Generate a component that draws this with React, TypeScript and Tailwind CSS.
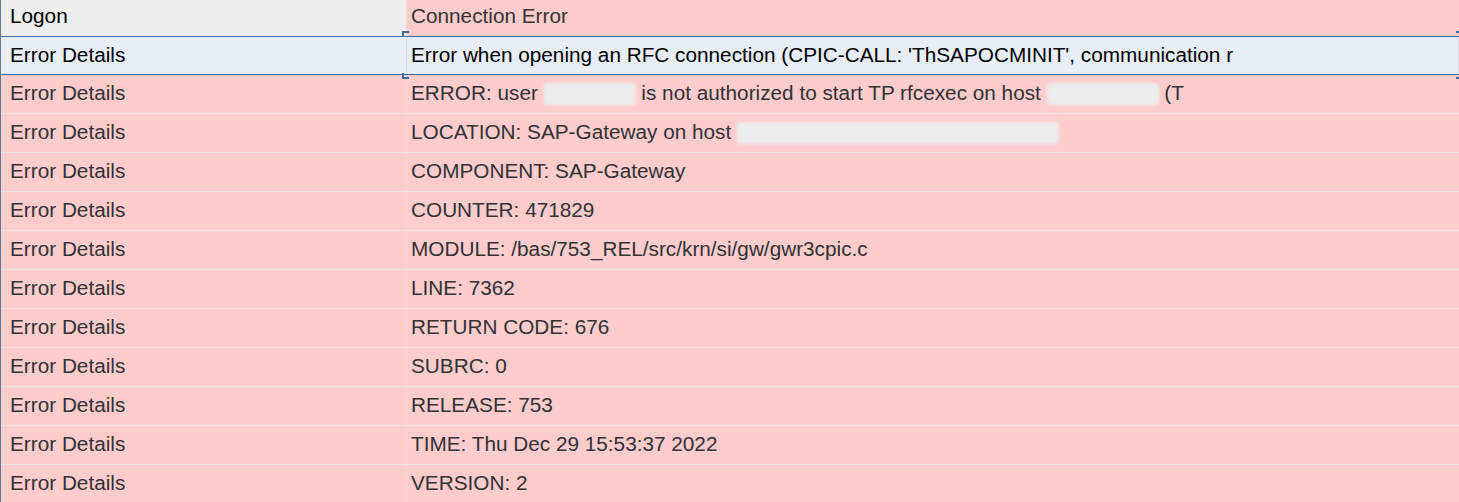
import type { ReactNode } from 'react';

type RowKind = 'head' | 'selected' | 'error';

// blurred-out redaction, like the ones in the original capture
function Redacted({ width }: { width: number }) {
  return (
    <span
      className="inline-block h-[22px] align-middle rounded-[3px] bg-[#ececec] blur-[1.5px]"
      style={{ width }}
    />
  );
}

function Row({ label, value, kind }: { label: string; value: ReactNode; kind: RowKind }) {
  if (kind === 'head') {
    return (
      <div className="flex h-[36px] pb-[3px] bg-[#ffcccc]">
        <div className="flex w-[405px] items-center bg-[#eeeeee] pl-[9px] text-black -mb-[3px] pb-[4px]">{label}</div>
        <div className="flex flex-1 items-center border-l border-[#ecdcdc] pl-[4px] pb-[1px] text-[#333333]">{value}</div>
      </div>
    );
  }

  if (kind === 'selected') {
    return (
      <div className="relative flex h-[39px] border-y border-[#3d6fa3] bg-[#e7eef8] text-black">
        <div className="flex w-[405px] items-center pl-[9px] pb-[1px]">{label}</div>
        <div className="flex flex-1 items-center whitespace-nowrap border-x border-[#d9dde3] pl-[4px] pb-[1px]">{value}</div>

        {/* focus frame corners */}
        <div className="absolute top-[-6px] left-[401px] h-[6px] w-[7px] border-l-2 border-t-2 border-[#3d6fa3]" />
        <div className="absolute bottom-[-5px] left-[401px] h-[6px] w-[7px] border-l-2 border-b-2 border-[#3d6fa3]" />
        <div className="absolute top-[-6px] right-0 h-[2px] w-[3px] bg-[#3d6fa3]" />
        <div className="absolute bottom-[-5px] right-0 h-[2px] w-[3px] bg-[#3d6fa3]" />
      </div>
    );
  }

  return (
    <div className="flex h-[39px] border-b border-[#f1e1e1] bg-[#ffcccc] text-[#303236]">
      <div className="flex w-[405px] items-center pl-[9px] pb-[1px]">{label}</div>
      <div className="flex flex-1 items-center whitespace-nowrap border-l border-[#ecdcdc] pl-[4px] pb-[1px]">{value}</div>
    </div>
  );
}

export default function App() {
  const details: ReactNode[] = [
    <>
      ERROR: user&nbsp;
      <Redacted width={92} />
      &nbsp;is not authorized to start TP rfcexec on host&nbsp;
      <Redacted width={112} />
      &nbsp;(T
    </>,
    <>
      LOCATION: SAP-Gateway on host&nbsp;
      <Redacted width={322} />
    </>,
    'COMPONENT: SAP-Gateway',
    'COUNTER: 471829',
    'MODULE: /bas/753_REL/src/krn/si/gw/gwr3cpic.c',
    'LINE: 7362',
    'RETURN CODE: 676',
    'SUBRC: 0',
    'RELEASE: 753',
    'TIME: Thu Dec 29 15:53:37 2022',
    'VERSION: 2',
  ];

  return (
    <div className="h-[502px] w-full overflow-hidden border-l border-[#647a92] bg-[#ffcccc] font-['Liberation_Sans',Arial,sans-serif] text-[20.75px] leading-none">
      <Row kind="head" label="Logon" value="Connection Error" />
      <Row
        kind="selected"
        label="Error Details"
        value="Error when opening an RFC connection (CPIC-CALL: 'ThSAPOCMINIT', communication r"
      />
      {details.map((d, i) => (
        <Row key={i} kind="error" label="Error Details" value={d} />
      ))}
    </div>
  );
}
